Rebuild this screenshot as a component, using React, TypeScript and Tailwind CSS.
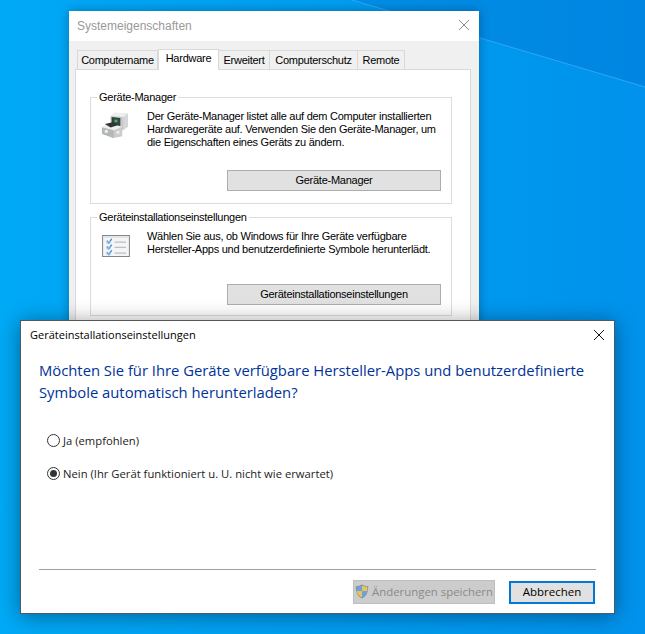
import React from 'react'

const backFont = "font-['Liberation_Sans',Arial,sans-serif]"
const dialogFont = "font-['Open_Sans','Noto_Sans',sans-serif]"

const tabs = [
  { label: 'Computername', width: 'w-[81px]' },
  { label: 'Hardware', width: 'w-[61px]', active: true },
  { label: 'Erweitert', width: 'w-[51px]' },
  { label: 'Computerschutz', width: 'w-[88px]' },
  { label: 'Remote', width: 'w-[47px]' }
]

function CloseIcon({ color, className }: { color: string; className?: string }) {
  return (
    <svg width="10" height="10" viewBox="0 0 10 10" className={`block ${className ?? ''}`}>
      <path d="M0 0 L10 10 M10 0 L0 10" stroke={color} strokeWidth="1" fill="none" />
    </svg>
  )
}

function DeviceIcon() {
  return (
    <svg width="29" height="28" viewBox="0 0 30 32" preserveAspectRatio="none" className="block">
      <path d="M10 7 L14 3 L28 4 L28 19 L23 23 L10 20 Z" fill="#d4d6d8" />
      <path d="M10 7 L23 8 L28 4 L14 3 Z" fill="#eeeff0" />
      <path d="M10 7 L23 8 L23 23 L10 20 Z" fill="#c6c9cb" />
      <path d="M11 8 L20 9 L20 19 L11 18 Z" fill="#3a4140" />
      <rect x="14" y="11" width="3" height="3" fill="#22c55e" />
      <path d="M1 20 L8 15 L22 19 L22 30 L13 32 L1 27 Z" fill="#c9cbcd" />
      <path d="M1 20 L8 15 L22 19 L13 23 Z" fill="#eceded" />
      <path d="M4 16 L12 14 L18 17 L10 20 Z" fill="#2f3534" />
      <path d="M1 20 L13 23 L13 32 L1 27 Z" fill="#b4b7ba" />
      <rect x="4" y="23" width="3" height="3" fill="#f4f4f4" />
      <rect x="16" y="24" width="3" height="3" fill="#eeeeee" />
    </svg>
  )
}

function ChecklistIcon() {
  return (
    <svg width="28" height="22" viewBox="0 0 29 23" className="ml-[1px] mt-[5px] block">
      <rect x="0.5" y="0.5" width="28" height="22" fill="#f4f5f6" stroke="#7d7f82" />
      <rect x="1" y="1" width="27" height="2" fill="#e2e3e4" />
      <path d="M5 6 L7 8.5 L10 4 M5 12 L7 14.5 L10 10 M5 18 L7 20.5 L10 16" stroke="#3d8ad6" strokeWidth="1.4" fill="none" />
      <rect x="4" y="6" width="5" height="3" fill="#a9c9e8" opacity="0.5" />
      <rect x="4" y="12" width="5" height="3" fill="#a9c9e8" opacity="0.5" />
      <rect x="4" y="18" width="5" height="3" fill="#a9c9e8" opacity="0.5" />
      <path d="M13 7.5 H25 M13 13 H25 M13 19 H25" stroke="#bdbfc1" strokeWidth="1.2" />
    </svg>
  )
}

function ShieldIcon() {
  return (
    <svg width="14" height="15" viewBox="0 0 15 17" className="block">
      <path d="M7.5 0.5 C10 2 12 2.5 14.5 2.5 C14.5 9 13 13.5 7.5 16.5 C2 13.5 0.5 9 0.5 2.5 C3 2.5 5 2 7.5 0.5 Z" fill="#7d8b99" />
      <path d="M7.5 1.5 V8 H1.5 C1.4 6 1.3 5 1.3 3.3 C3.5 3.2 5.5 2.7 7.5 1.5 Z" fill="#6fa3d8" />
      <path d="M7.5 1.5 C9.5 2.7 11.5 3.2 13.7 3.3 C13.7 5 13.6 6 13.5 8 H7.5 Z" fill="#e8c25c" />
      <path d="M1.5 8 H7.5 V15.5 C3.8 13.5 2 11 1.5 8 Z" fill="#e8c25c" />
      <path d="M7.5 8 H13.5 C13 11 11.2 13.5 7.5 15.5 Z" fill="#6fa3d8" />
    </svg>
  )
}

function Radio({ checked }: { checked?: boolean }) {
  return (
    <span className="flex h-[13px] w-[13px] shrink-0 items-center justify-center rounded-full border border-[#333] bg-white">
      {checked && <span className="h-[7px] w-[7px] rounded-full bg-[#333]" />}
    </span>
  )
}

function GroupBox({
  title,
  height,
  topHeight,
  icon,
  lines,
  button
}: {
  title: string
  height: string
  topHeight: string
  icon: React.ReactNode
  lines: string[]
  button: string
}) {
  return (
    <fieldset className={`${height} mx-0 min-w-0 border border-[#dcdcdc] px-[10px]`}>
      <legend className="-ml-[4px] px-[2px] text-[11px] leading-[13px] tracking-[-0.26px] text-black">{title}</legend>
      <div className={`flex ${topHeight} pt-[6px]`}>
        <div className="w-[46px] shrink-0">{icon}</div>
        <div className="text-[11px] leading-[13px] tracking-[-0.26px] text-black">
          {lines.map(line => (
            <p key={line} className="whitespace-nowrap">{line}</p>
          ))}
        </div>
      </div>
      <div className="flex justify-end">
        <button className="h-[21px] w-[214px] border border-[#adadad] bg-[#e1e1e1] text-[11px] tracking-[-0.26px] text-black">
          {button}
        </button>
      </div>
    </fieldset>
  )
}

function SystemWindow() {
  return (
    <section className={`absolute left-[69px] top-[11px] flex h-[330px] w-[410px] flex-col bg-[#f0f0f0] shadow-[0_0_10px_rgba(0,0,0,0.3)] ${backFont}`}>
      <header className="flex h-[30px] items-center justify-between bg-white pl-[8px] pr-[10px]">
        <span className="text-[12px] text-[#999]">Systemeigenschaften</span>
        <CloseIcon color="#8a8a8a" className="-mt-[2px]" />
      </header>
      <div className="flex h-[28px] items-end pl-[8px]">
        {tabs.map(tab => (
          <div
            key={tab.label}
            className={
              tab.active
                ? `relative z-10 -mb-px flex h-[21px] ${tab.width} items-start justify-center border border-b-0 border-[#d9d9d9] bg-white pt-[2px] text-[11px] leading-[13px] tracking-[-0.26px] text-black`
                : `flex h-[19px] ${tab.width} items-center justify-center border border-l-0 border-b-0 border-[#d9d9d9] bg-[#f0f0f0] text-[11px] leading-[13px] tracking-[-0.26px] text-black first:border-l`
            }
          >
            {tab.label}
          </div>
        ))}
      </div>
      <div className="ml-[6px] mr-[8px] flex flex-1 flex-col gap-[7px] border border-[#d9d9d9] bg-white pl-[14px] pr-[18px] pt-[21px]">
        <GroupBox
          title="Geräte-Manager"
          height="h-[113px]"
          topHeight="h-[66px]"
          icon={<DeviceIcon />}
          lines={[
            'Der Geräte-Manager listet alle auf dem Computer installierten',
            'Hardwaregeräte auf. Verwenden Sie den Geräte-Manager, um',
            'die Eigenschaften eines Geräts zu ändern.'
          ]}
          button="Geräte-Manager"
        />
        <GroupBox
          title="Geräteinstallationseinstellungen"
          height="h-[105px]"
          topHeight="h-[60px]"
          icon={<ChecklistIcon />}
          lines={[
            'Wählen Sie aus, ob Windows für Ihre Geräte verfügbare',
            'Hersteller-Apps und benutzerdefinierte Symbole herunterlädt.'
          ]}
          button="Geräteinstallationseinstellungen"
        />
      </div>
    </section>
  )
}

function SettingsDialog() {
  return (
    <section className={`absolute left-[20px] top-[320px] flex h-[294px] w-[595px] flex-col border border-[#4a5a66] border-t-[#555] bg-white shadow-[0_2px_20px_rgba(0,0,0,0.4)] ${dialogFont}`}>
      <header className="flex h-[28px] items-center justify-between pl-[9px] pr-[10px]">
        <span className="text-[11px] text-black">Geräteinstallationseinstellungen</span>
        <CloseIcon color="#111" />
      </header>
      <div className="flex-1 pl-[18px] pr-[18px]">
        <h1 className="mt-[10px] text-[14.8px] font-normal leading-[22px] text-[#003399]">
          Möchten Sie für Ihre Geräte verfügbare Hersteller-Apps und benutzerdefinierte
          <br />
          Symbole automatisch herunterladen?
        </h1>
        <div className="mt-[31px] flex flex-col gap-[20px] pl-[8px] text-[11.25px] leading-[13px] text-[#222]">
          <label className="flex items-center gap-[3px]">
            <Radio />
            Ja (empfohlen)
          </label>
          <label className="flex items-center gap-[3px]">
            <Radio checked />
            Nein (Ihr Gerät funktioniert u. U. nicht wie erwartet)
          </label>
        </div>
      </div>
      <footer className="mx-[18px] flex h-[44px] items-center justify-end gap-[14px] border-t border-[#a0a0a0] pr-[1px]">
        <button className="flex h-[24px] w-[142px] items-center justify-center gap-[3px] border border-[#bfbfbf] bg-[#cccccc] text-[11.4px] text-[#8a8a8a]">
          <ShieldIcon />
          Änderungen speichern
        </button>
        <button className="mt-[1px] h-[23px] w-[86px] border-2 border-[#0078d7] bg-[#e1e1e1] text-[11.5px] text-black">
          Abbrechen
        </button>
      </footer>
    </section>
  )
}

export default function App() {
  return (
    <main className="relative h-[634px] w-[645px] overflow-hidden bg-gradient-to-r from-[#00a9f6] to-[#0092ec]">
      {/* wallpaper light beam, top right */}
      <svg width="645" height="634" viewBox="0 0 645 634" className="absolute inset-0 block">
        <polygon points="352,0 645,87 645,0" fill="#0068c8" opacity="0.28" />
        <line x1="352" y1="0" x2="645" y2="87" stroke="#2fa6f4" strokeWidth="1" />
      </svg>
      <SystemWindow />
      <SettingsDialog />
    </main>
  )
}
